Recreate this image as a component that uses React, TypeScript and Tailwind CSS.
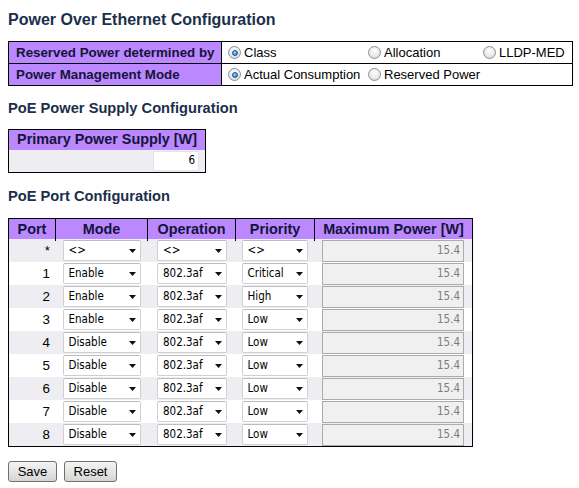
import React from "react";

const ports = [
  { port: "*", mode: "<>", op: "<>", pri: "<>" },
  { port: "1", mode: "Enable", op: "802.3af", pri: "Critical" },
  { port: "2", mode: "Enable", op: "802.3af", pri: "High" },
  { port: "3", mode: "Enable", op: "802.3af", pri: "Low" },
  { port: "4", mode: "Disable", op: "802.3af", pri: "Low" },
  { port: "5", mode: "Disable", op: "802.3af", pri: "Low" },
  { port: "6", mode: "Disable", op: "802.3af", pri: "Low" },
  { port: "7", mode: "Disable", op: "802.3af", pri: "Low" },
  { port: "8", mode: "Disable", op: "802.3af", pri: "Low" },
];

function Radio({ checked, label }: { checked?: boolean; label: string }) {
  return (
    <div className="flex items-center gap-[3px] whitespace-nowrap text-[13px]">
      <span className="flex h-[13px] w-[13px] shrink-0 items-center justify-center rounded-full border border-[#8c8e90] bg-[radial-gradient(circle_at_50%_35%,#ffffff,#d4d6d8)]">
        {checked && (
          <span className="h-[6px] w-[6px] rounded-full border border-[#1b4f8f] bg-[radial-gradient(circle_at_40%_35%,#9fd0ff,#2a6fc4)]" />
        )}
      </span>
      <span>{label}</span>
    </div>
  );
}

function Select({ value, width }: { value: string; width: string }) {
  return (
    <div
      className={`${width} flex h-[21px] items-center justify-between rounded-[2px] border border-[#d0d0d0] border-t-[#bdbdbd] bg-white pl-[5px] pr-[4px] font-['DejaVu_Sans_Condensed','DejaVu_Sans',sans-serif] text-[11.5px] text-black`}
    >
      <span>{value}</span>
      <svg width="7" height="4" viewBox="0 0 7 4">
        <path d="M0 0H7L3.5 4Z" fill="#111" />
      </svg>
    </div>
  );
}

export default function App() {
  return (
    <div className="min-h-screen bg-white px-2 font-['Liberation_Sans',Arial,sans-serif] text-[13.33px] text-black">
      <h1 className="pt-[11px] text-[16px] font-bold leading-[18px] text-[#1b2f4b]">
        Power Over Ethernet Configuration
      </h1>

      <div className="mt-[12px] w-[565px] border border-black">
        <div className="flex h-[22px] border-b border-black">
          <div className="flex w-[213px] items-center border-r border-black bg-[#bb88ff] pl-[7px] font-bold text-[#14143a]">
            Reserved Power determined by
          </div>
          <div className="grid flex-1 grid-cols-[140px_115px_1fr] items-center pl-[6px]">
            <Radio checked label="Class" />
            <Radio label="Allocation" />
            <Radio label="LLDP-MED" />
          </div>
        </div>
        <div className="flex h-[21px]">
          <div className="flex w-[213px] items-center border-r border-black bg-[#bb88ff] pl-[7px] font-bold text-[#14143a]">
            Power Management Mode
          </div>
          <div className="grid flex-1 grid-cols-[140px_115px_1fr] items-center pl-[6px]">
            <Radio checked label="Actual Consumption" />
            <Radio label="Reserved Power" />
          </div>
        </div>
      </div>

      <h2 className="mt-[14px] text-[14.67px] font-bold leading-[17px] text-[#1b2f4b]">
        PoE Power Supply Configuration
      </h2>

      <div className="mt-[12px] w-[198px] border border-black">
        <div className="flex h-[20px] items-center justify-center bg-[#bb88ff] text-[14.4px] font-bold text-[#14143a]">
          Primary Power Supply [W]
        </div>
        <div className="flex h-[22px] items-center justify-end bg-[#eeedf2] pr-[6px]">
          <div className="flex h-[20px] w-[46px] items-center justify-end border border-[#e4e4e8] bg-white pr-[3px] font-['DejaVu_Sans_Condensed','DejaVu_Sans',sans-serif] text-[11.5px]">
            6
          </div>
        </div>
      </div>

      <h2 className="mt-[15px] text-[14.67px] font-bold leading-[17px] text-[#1b2f4b]">
        PoE Port Configuration
      </h2>

      <div className="mt-[13px] w-[465px] border border-black">
        <div className="grid h-[20px] grid-cols-[46px_92px_88px_79px_158px] bg-[#bb88ff] text-[14.4px] font-bold text-[#14143a]">
          <div className="flex items-center justify-center">Port</div>
          <div className="flex items-center justify-center border-l border-black">Mode</div>
          <div className="flex items-center justify-center border-l border-black">Operation</div>
          <div className="flex items-center justify-center border-l border-black">Priority</div>
          <div className="flex items-center justify-center border-l border-black">Maximum Power [W]</div>
        </div>
        {ports.map((p, i) => (
          <div
            key={p.port}
            className={`grid h-[23px] grid-cols-[46px_92px_88px_79px_158px] items-center ${
              i % 2 === 0 ? "bg-[#eeedf2]" : "bg-white"
            }`}
          >
            <div className="pr-[5px] text-right">{p.port}</div>
            <div className="flex justify-center pl-[1px]">
              <Select value={p.mode} width="w-[78px]" />
            </div>
            <div className="flex justify-center pl-[2px]">
              <Select value={p.op} width="w-[70px]" />
            </div>
            <div className="flex justify-center">
              <Select value={p.pri} width="w-[66px]" />
            </div>
            <div className="flex justify-center">
              <div className="flex h-[22px] w-[142px] items-center justify-end border border-[#ababab] bg-[#f0f0f0] pr-[3px] font-['DejaVu_Sans_Condensed','DejaVu_Sans',sans-serif] text-[11.5px] text-[#7c7c7c]">
                15.4
              </div>
            </div>
          </div>
        ))}
      </div>

      <div className="mt-[14px] flex gap-[7px]">
        <button className="h-[21px] w-[49px] rounded-[3px] border border-[#707070] bg-gradient-to-b from-[#f4f4f4] to-[#d6d6d6] text-[13px] text-black">
          Save
        </button>
        <button className="h-[21px] w-[53px] rounded-[3px] border border-[#707070] bg-gradient-to-b from-[#f4f4f4] to-[#d6d6d6] text-[13px] text-black">
          Reset
        </button>
      </div>
    </div>
  );
}
